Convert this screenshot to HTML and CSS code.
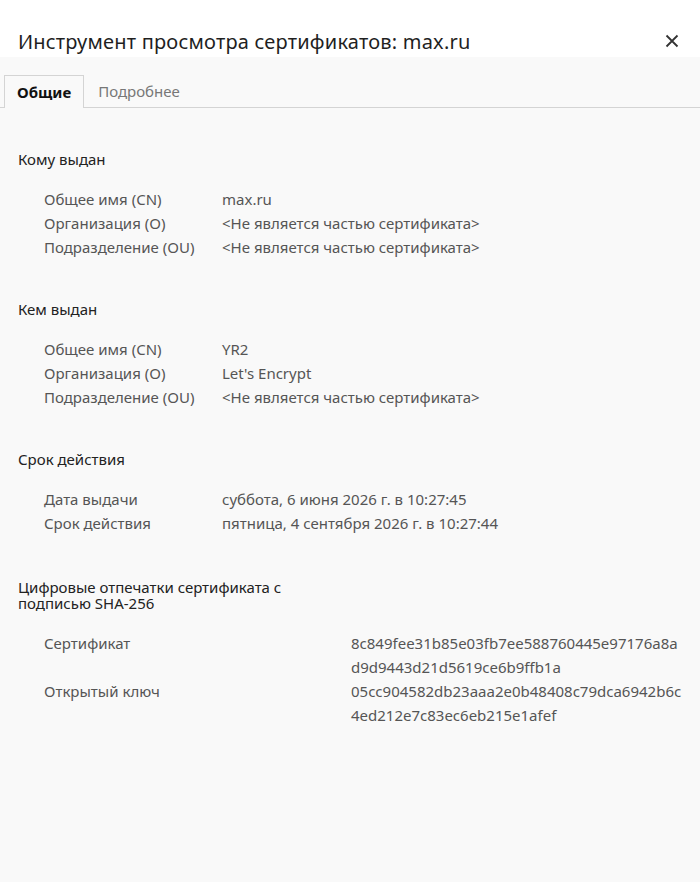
FILE: index.html
```html
<!DOCTYPE html>
<html lang="ru">
<head>
    <meta charset="UTF-8">
    <title>Инструмент просмотра сертификатов</title>
    <link rel="stylesheet" href="styles.css">
</head>
<body>
    <div class="dialog">
        <!-- Header -->
        <div class="header">
            <h1 class="title">Инструмент просмотра сертификатов: max.ru</h1>
            <button class="close-button" aria-label="Закрыть">
                <svg viewBox="0 0 14 14" width="14" height="14">
                    <path d="M1.5 1.5 L12.5 12.5 M12.5 1.5 L1.5 12.5" stroke="#333" stroke-width="1.8" fill="none" />
                </svg>
            </button>
        </div>

        <!-- Tabs -->
        <div class="tabs">
            <div class="tab tab-active">Общие</div>
            <div class="tab">Подробнее</div>
        </div>

        <div class="content">
            <!-- Issued to -->
            <div class="section">
                <h2 class="section-title">Кому выдан</h2>
                <div class="rows">
                    <div class="label">Общее имя (CN)</div>
                    <div class="value">max.ru</div>
                    <div class="label">Организация (O)</div>
                    <div class="value">&lt;Не является частью сертификата&gt;</div>
                    <div class="label">Подразделение (OU)</div>
                    <div class="value">&lt;Не является частью сертификата&gt;</div>
                </div>
            </div>

            <!-- Issued by -->
            <div class="section">
                <h2 class="section-title">Кем выдан</h2>
                <div class="rows">
                    <div class="label">Общее имя (CN)</div>
                    <div class="value">YR2</div>
                    <div class="label">Организация (O)</div>
                    <div class="value">Let's Encrypt</div>
                    <div class="label">Подразделение (OU)</div>
                    <div class="value">&lt;Не является частью сертификата&gt;</div>
                </div>
            </div>

            <!-- Validity -->
            <div class="section">
                <h2 class="section-title">Срок действия</h2>
                <div class="rows">
                    <div class="label">Дата выдачи</div>
                    <div class="value">суббота, 6 июня 2026 г. в 10:27:45</div>
                    <div class="label">Срок действия</div>
                    <div class="value">пятница, 4 сентября 2026 г. в 10:27:44</div>
                </div>
            </div>

            <!-- Fingerprints -->
            <div class="section section-fingerprints">
                <h2 class="section-title section-title-wrap">Цифровые отпечатки сертификата с подписью SHA-256</h2>
                <div class="rows rows-wide">
                    <div class="label">Сертификат</div>
                    <div class="value">8c849fee31b85e03fb7ee588760445e97176a8a<br>d9d9443d21d5619ce6b9ffb1a</div>
                    <div class="label">Открытый ключ</div>
                    <div class="value">05cc904582db23aaa2e0b48408c79dca6942b6c<br>4ed212e7c83ec6eb215e1afef</div>
                </div>
            </div>
        </div>
    </div>
</body>
</html>
```

FILE: styles.css
```css
* {
    margin: 0;
    padding: 0;
    box-sizing: border-box;
}

body {
    font-family: 'Noto Sans', 'Open Sans', sans-serif;
    background: #f9f9f9;
    color: #222;
    width: 700px;
    min-height: 882px;
}

.dialog {
    min-height: 882px;
}

/* Header */
.header {
    height: 57px;
    background: white;
    display: flex;
    align-items: flex-start;
    justify-content: space-between;
    padding: 28px 18px 0 18px;
}

.title {
    font-size: 20px;
    font-weight: 400;
    line-height: 28px;
    color: #1f1f1f;
    letter-spacing: 0.2px;
}

.close-button {
    border: none;
    background: none;
    width: 14px;
    height: 14px;
    margin-top: 6px;
    margin-right: 3px;
    display: flex;
}

/* Tabs */
.tabs {
    display: flex;
    margin-top: 18px;
    padding-left: 4px;
    border-bottom: 1px solid #d4d4d4;
    height: 33px;
}

.tab {
    font-size: 15px;
    color: #777;
    line-height: 32px;
    padding: 0 14px;
}

.tab-active {
    color: #111;
    font-weight: 700;
    border: 1px solid #d4d4d4;
    border-bottom: none;
    background: #f9f9f9;
    height: 33px;
    padding: 0 12px;
}

/* Content */
.content {
    padding: 39px 18px 0 18px;
}

.section {
    margin-bottom: 38px;
}

.section-title {
    font-size: 15px;
    font-weight: 400;
    line-height: 24px;
    color: #222;
    margin-bottom: 16px;
}

.section-title-wrap {
    width: 290px;
    line-height: 16px;
    padding-top: 6px;
    margin-bottom: 20px;
}

.rows {
    display: grid;
    grid-template-columns: 178px 1fr;
    padding-left: 26px;
    font-size: 15px;
    line-height: 24px;
    color: #555;
}

.rows-wide {
    grid-template-columns: 307px 1fr;
}
```
